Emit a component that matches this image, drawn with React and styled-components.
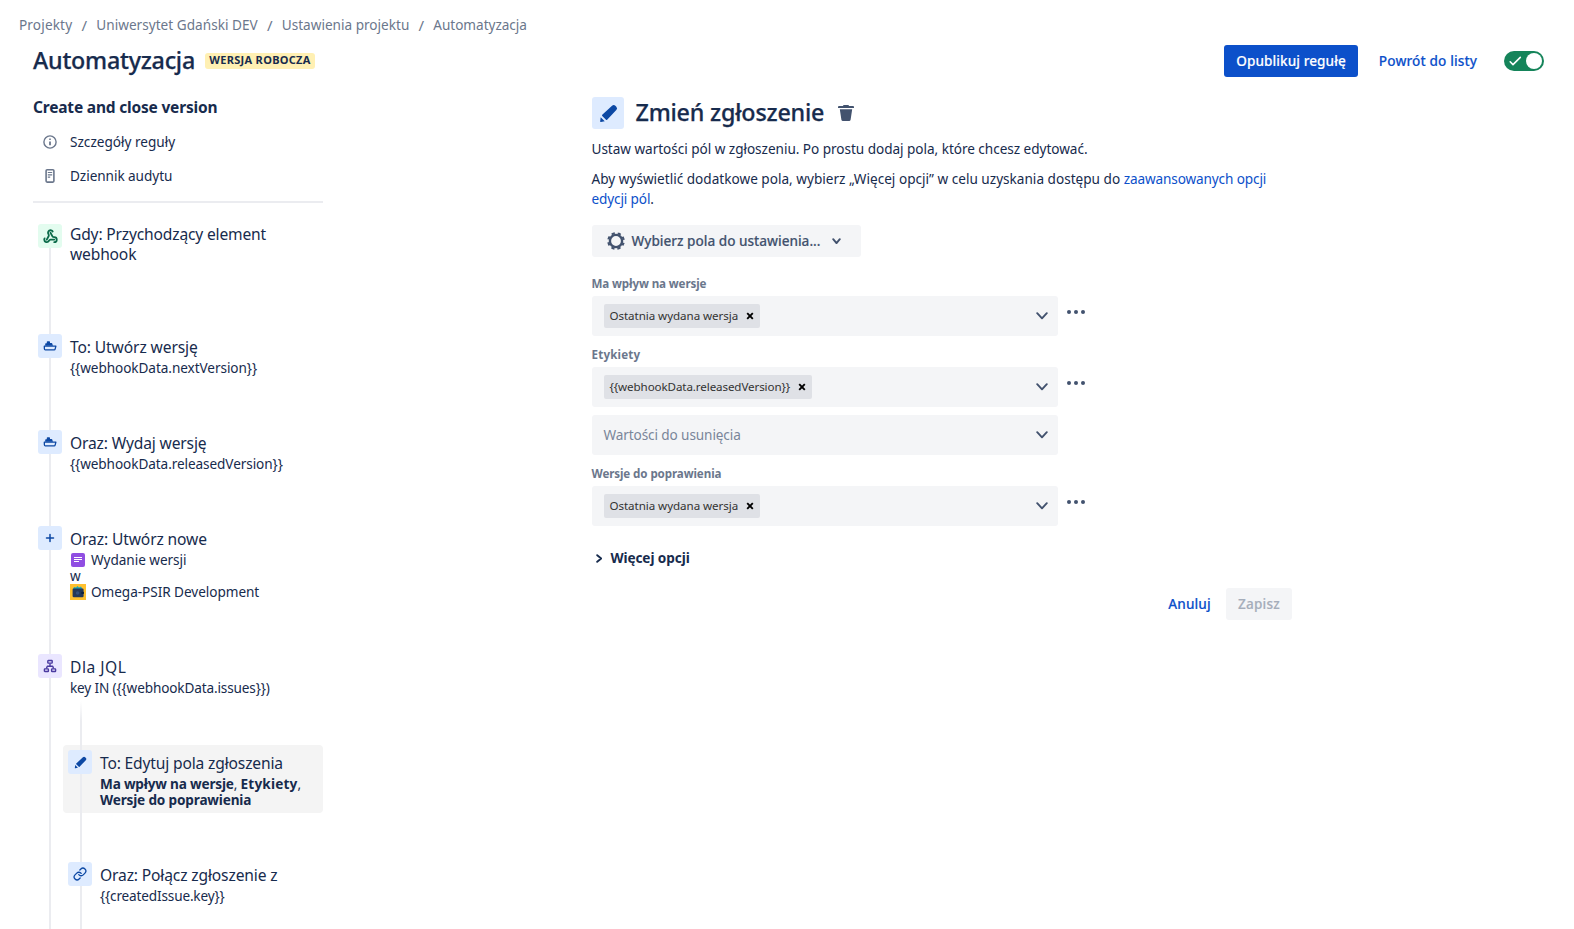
import React from "react";
import styled, { createGlobalStyle } from "styled-components";
import { Webhook, Link as ChainLink } from "lucide-react";

const GlobalStyle = createGlobalStyle`
  * { box-sizing: border-box; }
  body {
    margin: 0;
    background: #fff;
    color: #172b4d;
    font-family: "Noto Sans", "Open Sans", sans-serif;
    font-size: 13.6px;
    line-height: 20px;
    overflow: hidden;
  }
  button { font: inherit; color: inherit; border: 0; padding: 0; background: none; }
  svg { display: block; flex: none; }
`;

const T = styled.span`
  letter-spacing: ${(p) => p.$track || 0}px;
  white-space: nowrap;
`;

const Page = styled.div`
  display: flex;
  flex-direction: column;
  height: 929px;
  overflow: hidden;
`;

const Breadcrumbs = styled.nav`
  display: flex;
  padding: 15px 0 0 19px;
  height: 35px;
  color: #6b778c;
`;

const Slash = styled.span`
  width: 24px;
  text-align: center;
  font-size: 15px;
  letter-spacing: 0;
`;

const Header = styled.header`
  display: flex;
  align-items: center;
  height: 32px;
  margin: 10px 30px 0 33px;
`;

const Title = styled.h1`
  margin: 0;
  padding-bottom: 2px;
  font-size: 23.3px;
  font-weight: 500;
  line-height: 28px;
  -webkit-text-stroke: 0.25px;
`;

const Badge = styled.span`
  width: 110px;
  height: 16px;
  margin-left: 10px;
  padding-bottom: 2px;
  border-radius: 3px;
  background: #fff0b3;
  font-size: 11px;
  font-weight: 700;
  line-height: 14px;
  text-align: center;
`;

const HeaderActions = styled.div`
  display: flex;
  align-items: center;
  margin-left: auto;
`;

const Button = styled.button`
  display: flex;
  align-items: center;
  justify-content: center;
  width: ${(p) => p.$width}px;
  height: 32px;
  border-radius: 3px;
  font-weight: 500;
  line-height: 20px;
  -webkit-text-stroke: 0.15px;
  background: ${(p) =>
    ({ primary: "#0c50ca", subtle: "#f4f5f7" })[p.$kind] || "transparent"};
  color: ${(p) => ({ primary: "#fff", subtle: "#a5adba" })[p.$kind] || "#0c50ca"};
`;

const Toggle = styled.span`
  display: flex;
  align-items: center;
  justify-content: space-between;
  width: 40px;
  height: 20px;
  margin-left: 6px;
  padding: 0 2px 0 5px;
  border-radius: 10px;
  background: #15845a;
`;

const Knob = styled.span`
  width: 16px;
  height: 16px;
  border-radius: 50%;
  background: #fff;
`;

const Body = styled.main`
  display: flex;
  flex: 1;
  min-height: 0;
  padding: 20px 0 0 33px;
`;

const Sidebar = styled.aside`
  display: flex;
  flex-direction: column;
  width: 290px;
`;

const RuleName = styled.h2`
  margin: 0 0 8px;
  font-size: 15.5px;
  font-weight: 700;
  line-height: 20px;
`;

const MenuItem = styled.div`
  display: flex;
  align-items: center;
  gap: 12px;
  height: 34px;
  padding-left: 9px;
  svg { color: #6b778c; }
`;

const Divider = styled.hr`
  flex: none;
  width: 100%;
  height: 2px;
  margin: 8px 0 16px;
  border: 0;
  background: #ebecf0;
`;

const Tree = styled.div`
  position: relative;
  display: flex;
  flex-direction: column;
  flex: 1;
  gap: 44px;
  &::before {
    content: "";
    position: absolute;
    top: 20px;
    bottom: 0;
    left: 16px;
    width: 2px;
    background: #ebecf0;
  }
`;

const Branch = styled.div`
  position: relative;
  display: flex;
  flex-direction: column;
  flex: 1;
  gap: 44px;
  margin-left: 30px;
  &::before {
    content: "";
    position: absolute;
    top: -44px;
    bottom: 0;
    left: 17px;
    width: 2px;
    background: linear-gradient(rgba(235, 236, 240, 0), #ebecf0 20px);
  }
`;

const NodeBox = styled.div`
  display: flex;
  flex: none;
  align-items: flex-start;
  gap: 8px;
  padding: 5px;
  border-radius: 4px;
  background: ${(p) => (p.$selected ? "#f4f4f4" : "transparent")};
`;

const tones = {
  green: ["#e3fcef", "#0c6b4a"],
  blue: ["#deebff", "#0c48a4"],
  purple: ["#eae6ff", "#4a3aa0"],
};

const IconTile = styled.span`
  position: relative;
  display: flex;
  flex: none;
  align-items: center;
  justify-content: center;
  width: ${(p) => p.$size || 24}px;
  height: ${(p) => p.$size || 24}px;
  border-radius: 3px;
  background: ${(p) => tones[p.$tone][0]};
  color: ${(p) => tones[p.$tone][1]};
`;

const NodeText = styled.div`
  display: flex;
  flex-direction: column;
  gap: 3px;
  padding-top: ${(p) => (p.$trigger ? 0 : 3)}px;
`;

const NodeTitle = styled.div`
  font-size: 15.6px;
  line-height: 20px;
`;

const NodeDetail = styled.div`
  min-height: ${(p) => (p.$blank ? 13 : 16)}px;
  line-height: 16px;
  b { font-weight: 700; }
`;

const DetailLine = styled.div`
  display: flex;
  align-items: center;
  gap: 5px;
  height: 16px;
`;

const Panel = styled.section`
  width: 700px;
  margin-left: 269px;
`;

const PanelHead = styled.div`
  display: flex;
  align-items: center;
  height: 32px;
`;

const PanelTitle = styled.h2`
  margin: 0 14px 0 11.5px;
  padding-bottom: 3px;
  font-size: 23.3px;
  font-weight: 500;
  line-height: 28px;
  -webkit-text-stroke: 0.25px;
`;

const Paragraph = styled.p`
  margin: 10px 0 0 -0.5px;
  letter-spacing: ${(p) => p.$track}px;
`;

const A = styled.a`
  color: #0c50ca;
  letter-spacing: ${(p) => p.$track}px;
`;

const FieldPicker = styled.button`
  display: flex;
  align-items: center;
  width: 269px;
  height: 32px;
  margin: 16px 0 19px;
  padding-left: 14.5px;
  border-radius: 3px;
  background: #f4f5f7;
  color: #42526e;
  font-weight: 500;
  -webkit-text-stroke: 0.15px;
  ${T} { width: 200.5px; margin-left: 7px; text-align: left; }
`;

const Label = styled.div`
  margin: 11px 0 4px -0.5px;
  color: #6b778c;
  font-size: 11.6px;
  font-weight: 700;
  line-height: 16px;
`;

const SelectRow = styled.div`
  display: flex;
  align-items: flex-start;
  & + & { margin-top: 8px; }
`;

const SelectBox = styled.div`
  display: flex;
  align-items: center;
  justify-content: space-between;
  width: 466px;
  height: 40px;
  padding: 0 10px 0 12px;
  border-radius: 3px;
  background: #f4f5f7;
  color: #42526e;
`;

const Tag = styled.span`
  display: flex;
  align-items: center;
  gap: 8px;
  width: ${(p) => p.$width}px;
  height: 24px;
  padding: 0 6.5px 0 5.5px;
  justify-content: space-between;
  border-radius: 2px;
  background: #dfe1e6;
  color: #333;
  font-size: 11.6px;
`;

const Placeholder = styled.span`
  margin-left: -0.5px;
  color: #7a869a;
`;

const MoreButton = styled.button`
  display: flex;
  align-items: center;
  justify-content: center;
  width: 36px;
  height: 32px;
  color: #42526e;
`;

const MoreOptions = styled.div`
  display: flex;
  align-items: center;
  gap: 8px;
  margin-top: 22px;
  padding-left: 4px;
  font-weight: 700;
`;

const Footer = styled.div`
  display: flex;
  justify-content: flex-end;
  gap: 2px;
  margin-top: 20px;
`;

const InfoIcon = () => (
  <svg width="16" height="16" viewBox="0 0 16 16" fill="none" stroke="currentColor">
    <circle cx="8" cy="8" r="6.1" strokeWidth="1.4" />
    <path d="M8 7.4v3.8" strokeWidth="1.8" />
    <path d="M8 4.5v1.6" strokeWidth="1.6" />
  </svg>
);

const JournalIcon = () => (
  <svg width="16" height="16" viewBox="0 0 16 16" fill="none" stroke="currentColor">
    <rect x="4.1" y="1.7" width="7.8" height="12.4" rx="1" strokeWidth="1.6" />
    <path d="M5.8 4.5h4.4M5.8 6.9h4.4M5.8 9.2h2.4" strokeWidth="1.2" />
  </svg>
);

const ShipIcon = () => (
  <svg width="14" height="12" viewBox="0 0 14 12" fill="none" stroke="currentColor">
    <path d="M1.3 6.2h11.6l-.8 2.9a.9.9 0 0 1-.9.7H2.3a.9.9 0 0 1-.9-.8z" strokeWidth="1.3" strokeLinejoin="round" />
    <path d="M2.2 5.7V4a.7.7 0 0 1 .7-.7h.9V2a.7.7 0 0 1 .7-.7h1.8a.7.7 0 0 1 .7.7v.9h1.5a.7.7 0 0 1 .6.4l.9 2.4z" fill="currentColor" stroke="none" />
  </svg>
);

const PlusIcon = () => (
  <svg width="10" height="10" viewBox="0 0 10 10" fill="none" stroke="currentColor" strokeWidth="1.5" strokeLinecap="round">
    <path d="M5 1.5v7M1.5 5h7" />
  </svg>
);

const HierarchyIcon = () => (
  <svg width="14" height="14" viewBox="0 0 14 14" fill="none" stroke="currentColor" strokeWidth="1.4" strokeLinejoin="round">
    <rect x="4.8" y="1.5" width="4.4" height="2.6" rx=".5" />
    <rect x="1.4" y="9.9" width="4" height="2.6" rx=".5" />
    <rect x="8.6" y="9.9" width="4" height="2.6" rx=".5" />
    <path d="M7 4.4v2.8M3.4 9.6L4.3 7.2h5.4l.9 2.4" />
  </svg>
);

const PencilIcon = ({ size }) => (
  <svg width={size} height={size} viewBox="0 0 24 24" fill="currentColor">
    <path d="M4.5 15.6L4 19.4a.6.6 0 0 0 .7.7l3.7-.6z" />
    <path d="M19.5 5.5l-.9-.9a2.3 2.3 0 0 0-3.2 0L6 13.3a.8.8 0 0 0 0 1.1l3.6 3.6a.8.8 0 0 0 1.1 0l8.8-9.3a2.3 2.3 0 0 0 0-3.2z" />
  </svg>
);

const TrashIcon = () => (
  <svg width="16" height="17" viewBox="0 0 16 17" fill="#42526e">
    <path d="M5 1a1 1 0 0 1 1-1h4a1 1 0 0 1 1 1h4a1 1 0 0 1 1 1v1H0V2a1 1 0 0 1 1-1z" />
    <path d="M1.8 4.2h12.4l-1.6 10.6a1.6 1.6 0 0 1-1.6 1.3H5a1.6 1.6 0 0 1-1.6-1.3z" />
  </svg>
);

const GearIcon = () => (
  <svg width="18" height="18" viewBox="0 0 18 18" fill="none" stroke="currentColor">
    <circle cx="9" cy="9" r="6.1" strokeWidth="2.4" />
    <circle cx="9" cy="9" r="7.8" strokeWidth="2" strokeDasharray="3.3 2.826" strokeDashoffset="1.65" transform="rotate(22.5 9 9)" />
  </svg>
);

const Chevron = ({ w, h, stroke, right }) => (
  <svg width={right ? h : w} height={right ? w : h} viewBox={right ? `0 0 ${h} ${w}` : `0 0 ${w} ${h}`} fill="none" stroke="currentColor" strokeWidth={stroke} strokeLinecap="round" strokeLinejoin="round">
    <path
      d={
        right
          ? `M1.2 1.2L${h - 1.2} ${w / 2}L1.2 ${w - 1.2}`
          : `M1.2 1.2L${w / 2} ${h - 1.2}L${w - 1.2} 1.2`
      }
    />
  </svg>
);

const CrossIcon = () => (
  <svg width="8" height="8" viewBox="0 0 8 8" stroke="#000" strokeWidth="1.9">
    <path d="M1.2 1.2l5.6 5.6M6.8 1.2L1.2 6.8" />
  </svg>
);

const DotsIcon = () => (
  <svg width="18" height="4" viewBox="0 0 18 4" fill="currentColor">
    <circle cx="2" cy="2" r="2" />
    <circle cx="9" cy="2" r="2" />
    <circle cx="16" cy="2" r="2" />
  </svg>
);

const CheckIcon = () => (
  <svg width="13" height="10" viewBox="0 0 13 10" fill="none" stroke="#fff" strokeWidth="1.6" strokeLinecap="round" strokeLinejoin="round">
    <path d="M1.2 5.8L4 8.6L11.3 1.4" />
  </svg>
);

const IssueTypeIcon = () => (
  <svg width="16" height="16" viewBox="0 0 16 16">
    <rect x="1" y="1" width="14" height="14" rx="2" fill="#904ee2" />
    <path d="M4 5.5h8M4 7.5h8M4 9.5h5" stroke="#fff" strokeWidth="1" />
  </svg>
);

const ProjectAvatar = () => (
  <svg width="16" height="16" viewBox="0 0 16 16">
    <rect width="16" height="16" fill="#ffc02e" />
    <path d="M3 5l1-2 2 .6L7.5 2 9 3.4l2-.8L12.5 5z" fill="#1fa8b8" />
    <rect x="2.6" y="4.6" width="11" height="8.6" rx="1.2" fill="#253858" />
    <circle cx="7.6" cy="9" r="1.8" fill="#344f7c" />
    <rect x="11.2" y="7.8" width="2.8" height="2.2" rx=".8" fill="#10243f" />
  </svg>
);

const Node = ({ tone, icon, title, track, selected, trigger, children }) => (
  <NodeBox $selected={selected}>
    <IconTile $tone={tone}>{icon}</IconTile>
    <NodeText $trigger={trigger}>
      <NodeTitle>
        <T $track={track}>{title}</T>
      </NodeTitle>
      <NodeDetail $blank={trigger}>{children}</NodeDetail>
    </NodeText>
  </NodeBox>
);

const Select = ({ value, track, tagWidth, placeholder, menu = true }) => (
  <SelectRow>
    <SelectBox>
      {placeholder ? (
        <Placeholder>
          <T $track={-0.11}>{placeholder}</T>
        </Placeholder>
      ) : (
        <Tag $width={tagWidth}>
          <T $track={track}>{value}</T>
          <CrossIcon />
        </Tag>
      )}
      <Chevron w={12} h={7.5} stroke={1.9} />
    </SelectBox>
    {menu && (
      <MoreButton>
        <DotsIcon />
      </MoreButton>
    )}
  </SelectRow>
);

export default function App() {
  return (
    <Page>
      <GlobalStyle />
      <Breadcrumbs>
        <T $track={0.15}>Projekty</T>
        <Slash>/</Slash>
        <T $track={0.02}>Uniwersytet Gdański DEV</T>
        <Slash>/</Slash>
        <T>Ustawienia projektu</T>
        <Slash>/</Slash>
        <T $track={-0.04}>Automatyzacja</T>
      </Breadcrumbs>
      <Header>
        <Title>
          <T $track={-0.24}>Automatyzacja</T>
        </Title>
        <Badge>
          <T $track={0.3}>WERSJA ROBOCZA</T>
        </Badge>
        <HeaderActions>
          <Button $kind="primary" $width={134}>
            <T $track={0.07}>Opublikuj regułę</T>
          </Button>
          <Button $width={140}>
            <T $track={0.13}>Powrót do listy</T>
          </Button>
          <Toggle>
            <CheckIcon />
            <Knob />
          </Toggle>
        </HeaderActions>
      </Header>
      <Body>
        <Sidebar>
          <RuleName>
            <T $track={-0.19}>Create and close version</T>
          </RuleName>
          <MenuItem>
            <InfoIcon />
            <T>Szczegóły reguły</T>
          </MenuItem>
          <MenuItem>
            <JournalIcon />
            <T $track={-0.06}>Dziennik audytu</T>
          </MenuItem>
          <Divider />
          <Tree>
            <Node
              tone="green"
              trigger
              icon={<Webhook size={15} strokeWidth={2.9} />}
              track={-0.17}
              title={
                <>
                  Gdy: Przychodzący element
                  <br />
                  webhook
                </>
              }
            />
            <Node tone="blue" icon={<ShipIcon />} title="To: Utwórz wersję" track={-0.11}>
              <T $track={-0.07}>{"{{webhookData.nextVersion}}"}</T>
            </Node>
            <Node tone="blue" icon={<ShipIcon />} title="Oraz: Wydaj wersję" track={-0.16}>
              <T $track={-0.085}>{"{{webhookData.releasedVersion}}"}</T>
            </Node>
            <Node tone="blue" icon={<PlusIcon />} title="Oraz: Utwórz nowe" track={-0.12}>
              <DetailLine>
                <IssueTypeIcon />
                <T $track={-0.05}>Wydanie wersji</T>
              </DetailLine>
              <DetailLine>w</DetailLine>
              <DetailLine>
                <ProjectAvatar />
                <T $track={-0.05}>Omega-PSIR Development</T>
              </DetailLine>
            </Node>
            <Node tone="purple" icon={<HierarchyIcon />} title="Dla JQL" track={0.5}>
              <T $track={-0.14}>{"key IN ({{webhookData.issues}})"}</T>
            </Node>
            <Branch>
              <Node tone="blue" selected icon={<PencilIcon size={17} />} title="To: Edytuj pola zgłoszenia" track={-0.16}>
                <T $track={-0.19}>
                  <b>Ma wpływ na wersje</b>,{" "}
                </T>
                <T $track={0.17}>
                  <b>Etykiety</b>,
                </T>
                <br />
                <T $track={-0.165}>
                  <b>Wersje do poprawienia</b>
                </T>
              </Node>
              <Node tone="blue" icon={<ChainLink size={14} strokeWidth={2.2} />} title="Oraz: Połącz zgłoszenie z" track={-0.14}>
                <T $track={-0.16}>{"{{createdIssue.key}}"}</T>
              </Node>
            </Branch>
          </Tree>
        </Sidebar>
        <Panel>
          <PanelHead>
            <IconTile $tone="blue" $size={32}>
              <PencilIcon size={25} />
            </IconTile>
            <PanelTitle>
              <T $track={-0.2}>Zmień zgłoszenie</T>
            </PanelTitle>
            <TrashIcon />
          </PanelHead>
          <Paragraph $track={-0.042}>
            Ustaw wartości pól w zgłoszeniu. Po prostu dodaj pola, które chcesz edytować.
          </Paragraph>
          <Paragraph $track={0.003}>
            Aby wyświetlić dodatkowe pola, wybierz „Więcej opcji” w celu uzyskania dostępu do{" "}
            <A $track={-0.13}>zaawansowanych opcji edycji pól</A>.
          </Paragraph>
          <FieldPicker>
            <GearIcon />
            <T $track={-0.01}>Wybierz pola do ustawienia...</T>
            <Chevron w={9} h={6.4} stroke={1.9} />
          </FieldPicker>
          <Label>
            <T $track={-0.12}>Ma wpływ na wersje</T>
          </Label>
          <Select value="Ostatnia wydana wersja" track={-0.06} tagWidth={156} />
          <Label>
            <T $track={0.18}>Etykiety</T>
          </Label>
          <Select value="{{webhookData.releasedVersion}}" track={-0.1} tagWidth={208} />
          <Select placeholder="Wartości do usunięcia" menu={false} />
          <Label>
            <T $track={-0.1}>Wersje do poprawienia</T>
          </Label>
          <Select value="Ostatnia wydana wersja" track={-0.06} tagWidth={156} />
          <MoreOptions>
            <Chevron right w={9} h={6.4} stroke={1.9} />
            <T $track={-0.07}>Więcej opcji</T>
          </MoreOptions>
          <Footer>
            <Button $width={69}>
              <T $track={0.12}>Anuluj</T>
            </Button>
            <Button $kind="subtle" $width={66}>
              <T $track={0.17}>Zapisz</T>
            </Button>
          </Footer>
        </Panel>
      </Body>
    </Page>
  );
}
